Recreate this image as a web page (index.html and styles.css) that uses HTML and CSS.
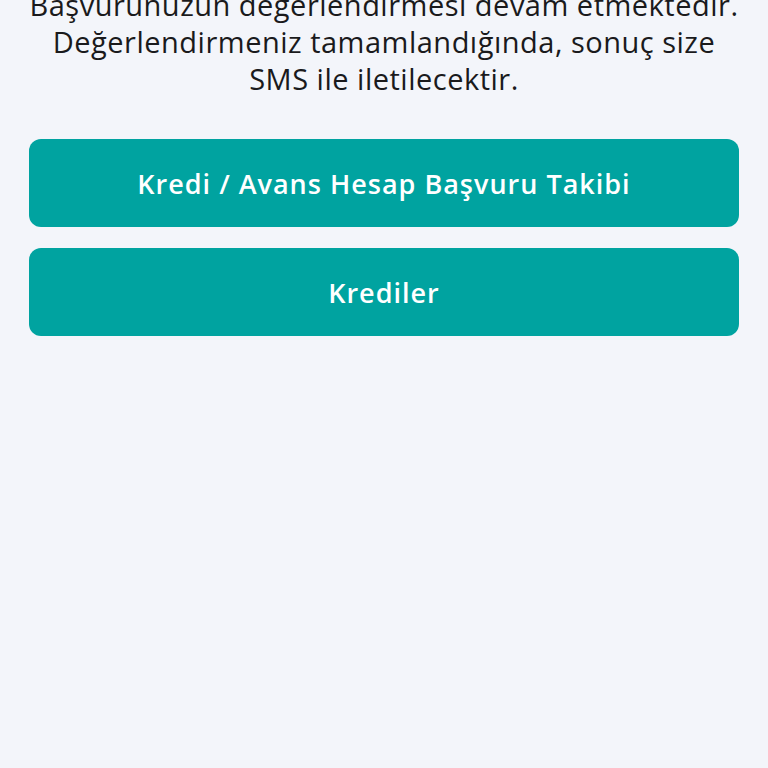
FILE: index.html
```html
<!DOCTYPE html>
<html lang="tr">
<head>
<meta charset="utf-8">
<link rel="stylesheet" href="styles.css">
</head>
<body>
<main class="page">
  <p class="message">Başvurunuzun değerlendirmesi devam etmektedir.<br>Değerlendirmeniz tamamlandığında, sonuç size<br>SMS ile iletilecektir.</p>
  <div class="actions">
    <button class="btn">Kredi / Avans Hesap Başvuru Takibi</button>
    <button class="btn">Krediler</button>
  </div>
</main>
</body>
</html>
```
FILE: styles.css
```css
html, body {
  margin: 0;
  padding: 0;
  background: #f3f5fa;
  height: 100%;
}
.page {
  font-family: "Open Sans", Roboto, sans-serif;
  padding: 0 29px;
}
.message {
  margin: -14px 0 0;
  font-size: 29px;
  line-height: 37px;
  letter-spacing: 0.5px;
  color: #1a1a1c;
  text-align: center;
  white-space: nowrap;
}
.actions {
  display: flex;
  flex-direction: column;
  gap: 21px;
  margin-top: 42px;
}
.btn {
  height: 88px;
  border: none;
  border-radius: 12px;
  background: #00a3a0;
  color: #ffffff;
  font-family: "Open Sans", Roboto, sans-serif;
  font-size: 27px;
  font-weight: 600;
  letter-spacing: 1px;
}
```
